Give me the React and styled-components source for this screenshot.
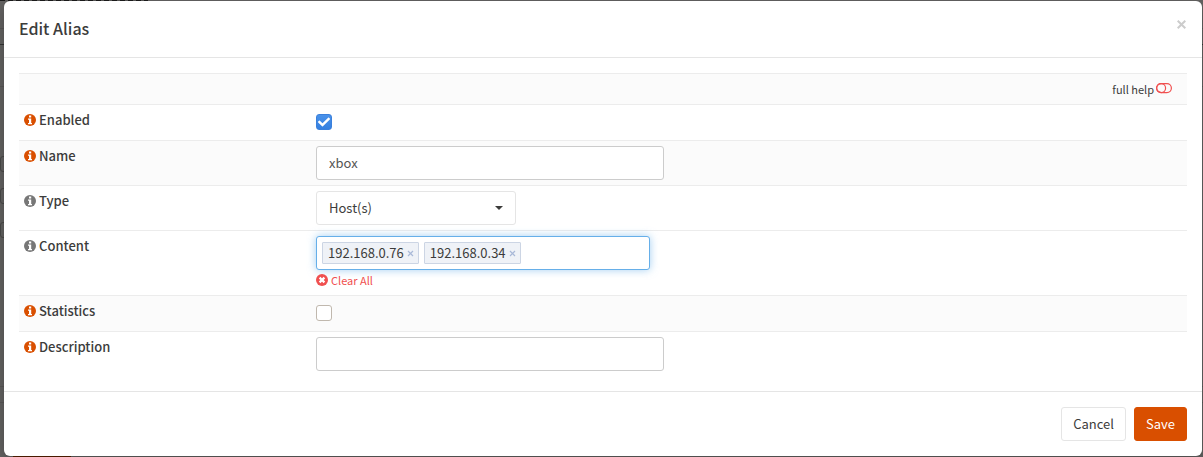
import { useState } from "react";
import styled, { createGlobalStyle, css } from "styled-components";
import { FaCheck } from "react-icons/fa";

const GlobalStyle = createGlobalStyle`
  * {
    box-sizing: border-box;
  }

  body {
    margin: 0;
    background: #656463;
    color: #3c3c3b;
    font-family: "Source Sans Pro", "Noto Sans CJK SC", "Noto Sans", sans-serif;
    font-size: 13px;
    line-height: 20px;
  }

  button,
  input,
  select {
    font: inherit;
    color: inherit;
  }
`;

const Page = styled.div`
  position: relative;
  padding: 1px 1px 1px 4px;
`;

/* dimmed page behind the dialog */
const Backdrop = styled.div`
  position: absolute;
  inset: 0;
  overflow: hidden;
`;

const BackdropHeading = styled.div`
  position: absolute;
  top: 0;
  left: 0;
  width: 148px;
  height: 1px;
  background: repeating-linear-gradient(90deg, #1c1c1c 0 5px, #5c5b5a 5px 8px);
`;

const BackdropLine = styled.div`
  position: absolute;
  top: ${(props) => props.$top}px;
  left: 0;
  right: 0;
  height: 1px;
  background: ${(props) => (props.$dark ? "#353534" : "#5a5958")};
`;

const BackdropBox = styled.div`
  position: absolute;
  top: ${(props) => props.$top}px;
  left: 0;
  width: 200px;
  height: 16px;
  border: 1px solid #4b4a49;
  border-radius: 3px;
`;

const BackdropButton = styled.div`
  position: absolute;
  bottom: 0;
  left: 13px;
  width: 58px;
  height: 20px;
  background: #5b2200;
`;

const Dialog = styled.form`
  position: relative;
  background: #fff;
  border-radius: 6px;
  box-shadow: 0 5px 15px rgba(0, 0, 0, 0.3);
`;

const DialogHeader = styled.header`
  display: flex;
  justify-content: space-between;
  align-items: flex-start;
  padding: 14px 15px 16px;
  border-bottom: 1px solid #e5e5e5;
`;

const Title = styled.h4`
  margin: 0;
  font-size: 16px;
  font-weight: 500;
  line-height: 26px;
`;

const CloseButton = styled.button`
  display: flex;
  padding: 5px 1px;
  border: 0;
  background: none;
  color: #ccc;
  cursor: pointer;
`;

const DialogBody = styled.div`
  padding: 15px;
`;

const Row = styled.div`
  display: grid;
  grid-template-columns: 25% 1fr;
  border-top: 1px solid #ececec;
  background: ${(props) => (props.$striped ? "#fbfbfb" : "#fff")};
`;

const HelpRow = styled(Row)`
  grid-template-columns: 1fr;
  justify-items: end;
  padding: 5px 15px 5px 5px;
`;

const HelpToggle = styled.button`
  display: flex;
  align-items: center;
  gap: 2px;
  padding: 0;
  border: 0;
  background: none;
  font-size: 11px;
  line-height: 20px;
  cursor: pointer;
`;

const Cell = styled.div`
  padding: 5px;
`;

const FieldLabel = styled.label`
  display: flex;
  align-items: center;
  gap: 3px;
  font-weight: 500;
  line-height: 20px;
`;

const inputBox = css`
  display: block;
  height: 34px;
  border: 1px solid #ccc;
  border-radius: 3px;
  background: #fff;
`;

const TextInput = styled.input`
  ${inputBox}
  width: 348px;
  max-width: 100%;
  padding: 5px 12px 7px;
  color: #555;
`;

const SelectWrap = styled.div`
  position: relative;
  width: 200px;
`;

const Select = styled.select`
  ${inputBox}
  width: 100%;
  padding: 6px 12px;
  border-color: #e5e5e5;
  appearance: none;
`;

const Caret = styled.span`
  position: absolute;
  top: 15px;
  right: 13px;
  border: 4px solid transparent;
  border-top-color: currentColor;
  border-bottom: 0;
  pointer-events: none;
`;

const TokenBox = styled.div`
  ${inputBox}
  display: flex;
  gap: 5px;
  width: 334px;
  max-width: 100%;
  padding: 5px;
  border-color: #66afe9;
  box-shadow: 0 0 8px rgba(102, 175, 233, 0.6);
`;

const Token = styled.span`
  display: flex;
  align-items: center;
  gap: 3px;
  height: 22px;
  padding: 0 4px 0 5px;
  border: 1px solid #ccd5e4;
  border-radius: 1px;
  background: #eff2f7;
`;

const TokenRemove = styled.button`
  display: flex;
  padding: 0;
  border: 0;
  background: none;
  color: #a9b9d8;
  cursor: pointer;
`;

const TokenInput = styled.input`
  flex: 1;
  min-width: 0;
  padding: 0;
  border: 0;
  outline: 0;
  background: none;
`;

const ClearLink = styled.a`
  display: flex;
  align-items: center;
  gap: 3px;
  width: max-content;
  color: #f05050;
  font-size: 11px;
  line-height: 20px;
  text-decoration: none;
`;

const CheckWrap = styled.div`
  position: relative;
  width: 16px;
  height: 25px;
  padding-top: 4px;
`;

const CheckBox = styled.input`
  display: block;
  width: 16px;
  height: 16px;
  margin: 0;
  border: 1px solid #c0b8ae;
  border-radius: 3px;
  background: #fff;
  appearance: none;

  &:checked {
    border-color: #3a80dc;
    background: linear-gradient(#4a92ea, #3580e0);
  }
`;

const CheckMark = styled(FaCheck)`
  position: absolute;
  top: 6px;
  left: 2px;
  color: #fff;
  pointer-events: none;
`;

const DialogFooter = styled.footer`
  display: flex;
  justify-content: flex-end;
  gap: 8px;
  padding: 15px;
  border-top: 1px solid #e5e5e5;
`;

const Button = styled.button`
  height: 34px;
  padding: 6px 11px;
  border: 1px solid ${(props) => (props.$primary ? "#d94f00" : "#e5e5e5")};
  border-radius: 3px;
  background: ${(props) => (props.$primary ? "#d94f00" : "#fff")};
  color: ${(props) => (props.$primary ? "#fff" : "#3c3c3b")};
  line-height: 20px;
  cursor: pointer;
`;

const InfoIcon = ({ color }) => (
  <svg width="12" height="12" viewBox="0 0 12 12" aria-hidden="true">
    <circle cx="6" cy="6" r="6" fill={color} />
    <path d="M5 1.5h2.2v2H5zM4 4.5h3.2V9H8v1.3H4V9h1V5.8H4z" fill="#fff" />
  </svg>
);

const ToggleIcon = () => (
  <svg width="16" height="12" viewBox="0 0 16 12" fill="none" stroke="#f05050" strokeWidth="1.2" aria-hidden="true">
    <rect x="0.6" y="0.6" width="14.8" height="9" rx="4.5" />
    <circle cx="5.1" cy="5.1" r="4.5" />
  </svg>
);

const ClearIcon = () => (
  <svg width="12" height="12" viewBox="0 0 12 12" aria-hidden="true">
    <circle cx="6" cy="6" r="6" fill="#f05050" />
    <path d="M3.6 3.6l4.8 4.8M8.4 3.6L3.6 8.4" stroke="#fff" strokeWidth="2.2" />
  </svg>
);

const Field = ({ id, label, muted, striped, children }) => (
  <Row $striped={striped}>
    <Cell>
      <FieldLabel htmlFor={id}>
        <InfoIcon color={muted ? "#777" : "#d94f00"} />
        {label}
      </FieldLabel>
    </Cell>
    <Cell>{children}</Cell>
  </Row>
);

const Check = ({ id, checked, onChange }) => (
  <CheckWrap>
    <CheckBox id={id} type="checkbox" checked={checked} onChange={(e) => onChange(e.target.checked)} />
    {checked && <CheckMark size={12} />}
  </CheckWrap>
);

const App = () => {
  const [enabled, setEnabled] = useState(true);
  const [statistics, setStatistics] = useState(false);
  const [hosts, setHosts] = useState(["192.168.0.76", "192.168.0.34"]);

  const removeHost = (host) => setHosts(hosts.filter((item) => item !== host));

  const clearHosts = (e) => {
    e.preventDefault();
    setHosts([]);
  };

  return (
    <Page>
      <GlobalStyle />
      <Backdrop aria-hidden="true">
        <BackdropHeading />
        <BackdropLine $top={28} />
        <BackdropLine $top={44} $dark />
        <BackdropLine $top={86} />
        <BackdropBox $top={156} />
        <BackdropBox $top={188} />
        <BackdropBox $top={222} />
        <BackdropLine $top={386} />
        <BackdropLine $top={402} />
        <BackdropButton />
      </Backdrop>
      <Dialog role="dialog" aria-labelledby="dialog-title" onSubmit={(e) => e.preventDefault()}>
        <DialogHeader>
          <Title id="dialog-title">Edit Alias</Title>
          <CloseButton type="button" aria-label="Close">
            <svg width="9" height="9" viewBox="0 0 9 9" stroke="currentColor" strokeWidth="2">
              <path d="M0.7 0.7l7.6 7.6M8.3 0.7L0.7 8.3" />
            </svg>
          </CloseButton>
        </DialogHeader>
        <DialogBody>
          <HelpRow $striped>
            <HelpToggle type="button">
              full help
              <ToggleIcon />
            </HelpToggle>
          </HelpRow>
          <Field id="enabled" label="Enabled">
            <Check id="enabled" checked={enabled} onChange={setEnabled} />
          </Field>
          <Field id="name" label="Name" striped>
            <TextInput id="name" type="text" defaultValue="xbox" />
          </Field>
          <Field id="type" label="Type" muted>
            <SelectWrap>
              <Select id="type">
                <option>Host(s)</option>
              </Select>
              <Caret />
            </SelectWrap>
          </Field>
          <Field id="content" label="Content" muted>
            <TokenBox>
              {hosts.map((host) => (
                <Token key={host}>
                  {host}
                  <TokenRemove type="button" aria-label={`Remove ${host}`} onClick={() => removeHost(host)}>
                    <svg width="7" height="7" viewBox="0 0 7 7" stroke="currentColor" strokeWidth="1.2">
                      <path d="M1 1l5 5M6 1L1 6" />
                    </svg>
                  </TokenRemove>
                </Token>
              ))}
              <TokenInput id="content" type="text" />
            </TokenBox>
            <ClearLink href="#" onClick={clearHosts}>
              <ClearIcon />
              Clear All
            </ClearLink>
          </Field>
          <Field id="statistics" label="Statistics" striped>
            <Check id="statistics" checked={statistics} onChange={setStatistics} />
          </Field>
          <Field id="description" label="Description">
            <TextInput id="description" type="text" />
          </Field>
        </DialogBody>
        <DialogFooter>
          <Button type="button">Cancel</Button>
          <Button type="submit" $primary>
            Save
          </Button>
        </DialogFooter>
      </Dialog>
    </Page>
  );
};

export default App;
